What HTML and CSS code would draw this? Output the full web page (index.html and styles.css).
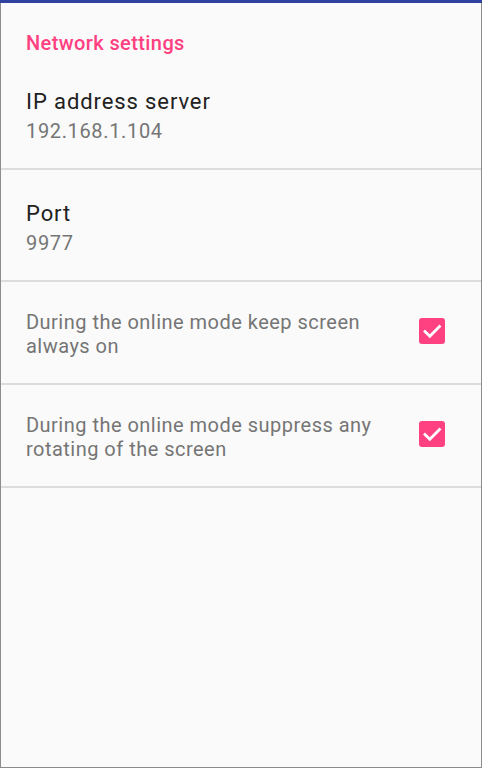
FILE: index.html
```html
<!DOCTYPE html>
<html lang="en">
<head>
    <meta charset="UTF-8">
    <meta name="viewport" content="width=device-width, initial-scale=1.0">
    <title>Settings</title>
    <link rel="stylesheet" href="styles.css">
</head>
<body>
    <div class="screen">
        <div class="top-bar"></div>

        <div class="category">Network settings</div>

        <div class="pref">
            <div class="pref-title">IP address server</div>
            <div class="pref-summary">192.168.1.104</div>
        </div>

        <div class="pref">
            <div class="pref-title">Port</div>
            <div class="pref-summary">9977</div>
        </div>

        <div class="pref check-pref">
            <div class="check-text">During the online mode keep screen always on</div>
            <div class="checkbox">
                <svg viewBox="0 0 26 26" width="26" height="26">
                    <path d="M6 13.5 L10.8 18.2 L20.5 8.5" fill="none" stroke="#fff" stroke-width="2.8" stroke-linecap="square"/>
                </svg>
            </div>
        </div>

        <div class="pref check-pref">
            <div class="check-text">During the online mode suppress any rotating of the screen</div>
            <div class="checkbox">
                <svg viewBox="0 0 26 26" width="26" height="26">
                    <path d="M6 13.5 L10.8 18.2 L20.5 8.5" fill="none" stroke="#fff" stroke-width="2.8" stroke-linecap="square"/>
                </svg>
            </div>
        </div>
    </div>
</body>
</html>
```
FILE: styles.css
```css
body {
    margin: 0;
    font-family: Roboto, "Liberation Sans", sans-serif;
    background: #fff;
}
.screen {
    width: 480px;
    height: 767px;
    background: #fafafa;
    border-left: 1px solid #8c8c8c;
    border-right: 1px solid #8c8c8c;
    border-bottom: 1px solid #8c8c8c;
}
.top-bar {
    height: 3px;
    background: #3141a2;
    margin: 0 -1px;
}
.category {
    height: 55px;
    box-sizing: border-box;
    padding: 28px 0 0 25px;
    font-size: 20px;
    line-height: 24px;
    letter-spacing: 0.4px;
    font-weight: 500;
    color: #ff4081;
}
.pref {
    padding: 30px 0 22px 25px;
    border-bottom: 2px solid #dcdcdc;
}
.pref-title {
    font-size: 22px;
    line-height: 28px;
    letter-spacing: 0.9px;
    color: #212121;
}
.pref-summary {
    font-size: 20px;
    line-height: 30px;
    letter-spacing: 0.65px;
    color: #757575;
}
.check-pref {
    display: flex;
    align-items: center;
    padding: 28px 36px 25px 25px;
}
.check-text {
    flex: 1;
    margin-right: 20px;
    font-size: 20px;
    line-height: 24px;
    letter-spacing: 0.48px;
    color: #757575;
}
.checkbox {
    width: 26px;
    height: 26px;
    margin-bottom: 6px;
    border-radius: 3px;
    background: #ff4081;
}
.checkbox svg {
    display: block;
}
```
